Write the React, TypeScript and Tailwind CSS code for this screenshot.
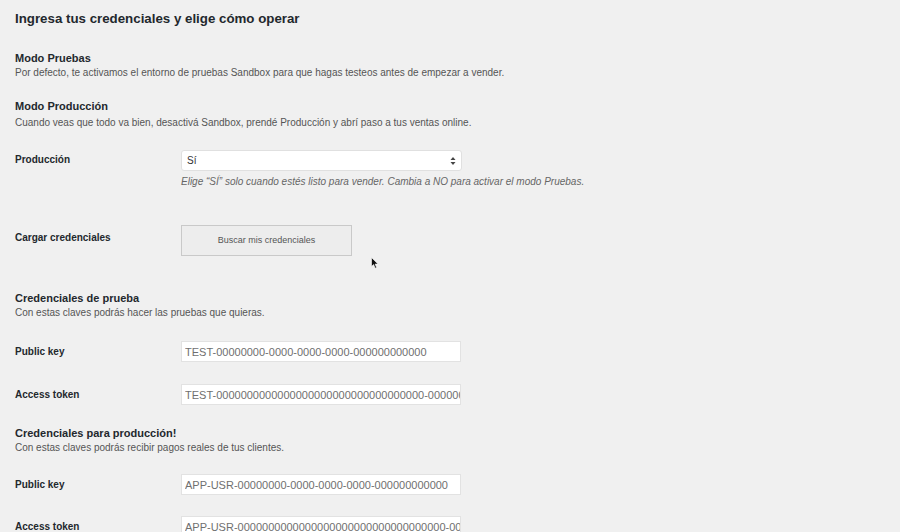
import React from "react";

const font = { fontFamily: '"Liberation Sans", Arial, sans-serif' };

function Row({ label, children, className = "", labelClass = "" }: { label: string; children: React.ReactNode; className?: string; labelClass?: string }) {
  return (
    <div className={"flex " + className}>
      <div className={"w-[166px] shrink-0 text-[10px] font-bold text-[#23282d] " + labelClass}>{label}</div>
      {children}
    </div>
  );
}

function TextInput({ value }: { value: string }) {
  return (
    <input
      readOnly
      value={value}
      style={font}
      className="w-[280px] h-[21px] bg-white border border-[#e2e2e2] pl-[3px] pr-0 text-[11px] text-[#6f6f6f] outline-none"
    />
  );
}

export default function App() {
  return (
    <div style={font} className="relative w-[900px] h-[532px] overflow-hidden bg-[#f0f0f0] pl-[15px] pt-[10px]">
      <h1 className="text-[13.3px] leading-[18px] font-semibold text-[#23282d]">Ingresa tus credenciales y elige cómo operar</h1>

      <h2 className="mt-[23px] text-[11px] leading-[14px] font-semibold text-[#23282d]">Modo Pruebas</h2>
      <p className="mt-[1px] text-[10px] leading-[14px] text-[#555]">
        Por defecto, te activamos el entorno de pruebas Sandbox para que hagas testeos antes de empezar a vender.
      </p>

      <h2 className="mt-[19px] text-[11px] leading-[14px] font-semibold text-[#23282d]">Modo Producción</h2>
      <p className="mt-[3px] text-[10px] leading-[14px] text-[#555]">
        Cuando veas que todo va bien, desactivá Sandbox, prendé Producción y abrí paso a tus ventas online.
      </p>

      <Row label="Producción" className="mt-[20px] items-center" labelClass="-mt-[2px]">
        <div className="w-[281px] h-[21px] bg-white border border-[#e0e0e0] rounded-[3px] flex items-center justify-between pl-[5px] pr-[5px] text-[10px] text-[#333]">
          <span>Sí</span>
          <svg width="6" height="10" viewBox="0 0 6 10">
            <path d="M3 1 L5.5 4 L0.5 4 Z" fill="#444" />
            <path d="M3 9 L5.5 6 L0.5 6 Z" fill="#444" />
          </svg>
        </div>
      </Row>
      <p className="mt-[4px] ml-[166px] text-[10px] leading-[14px] italic text-[#666]">
        Elige “SÍ” solo cuando estés listo para vender. Cambia a NO para activar el modo Pruebas.
      </p>

      <Row label="Cargar credenciales" className="mt-[36px] items-start" labelClass="mt-[5px]">
        <div className="w-[171px] h-[31px] bg-[#ededed] border border-[#c9c9c9] flex items-center justify-center text-[9px] text-[#555]">
          Buscar mis credenciales
        </div>
      </Row>

      <h2 className="mt-[35px] text-[11px] leading-[14px] font-semibold text-[#23282d]">Credenciales de prueba</h2>
      <p className="mt-[1px] text-[10px] leading-[14px] text-[#555]">Con estas claves podrás hacer las pruebas que quieras.</p>

      <Row label="Public key" className="mt-[21px] items-center">
        <TextInput value="TEST-00000000-0000-0000-0000-000000000000" />
      </Row>
      <Row label="Access token" className="mt-[22px] items-center">
        <TextInput value="TEST-0000000000000000000000000000000000-000000000000-00000000" />
      </Row>

      <h2 className="mt-[21px] text-[11px] leading-[14px] font-semibold text-[#23282d]">Credenciales para producción!</h2>
      <p className="mt-[1px] text-[10px] leading-[14px] text-[#555]">Con estas claves podrás recibir pagos reales de tus clientes.</p>

      <Row label="Public key" className="mt-[19px] items-center">
        <TextInput value="APP-USR-00000000-0000-0000-0000-000000000000" />
      </Row>
      <Row label="Access token" className="mt-[21px] items-center">
        <TextInput value="APP-USR-0000000000000000000000000000000000-000000000000-00000000" />
      </Row>

      <svg className="absolute left-[371px] top-[257px]" width="8" height="12" viewBox="0 0 8 12">
        <path d="M0.5 0.5 L0.5 9.5 L2.6 7.6 L4.2 11.2 L5.6 10.6 L4.1 7.1 L7 7.1 Z" fill="#111" stroke="#fff" strokeWidth="0.6" />
      </svg>
    </div>
  );
}
